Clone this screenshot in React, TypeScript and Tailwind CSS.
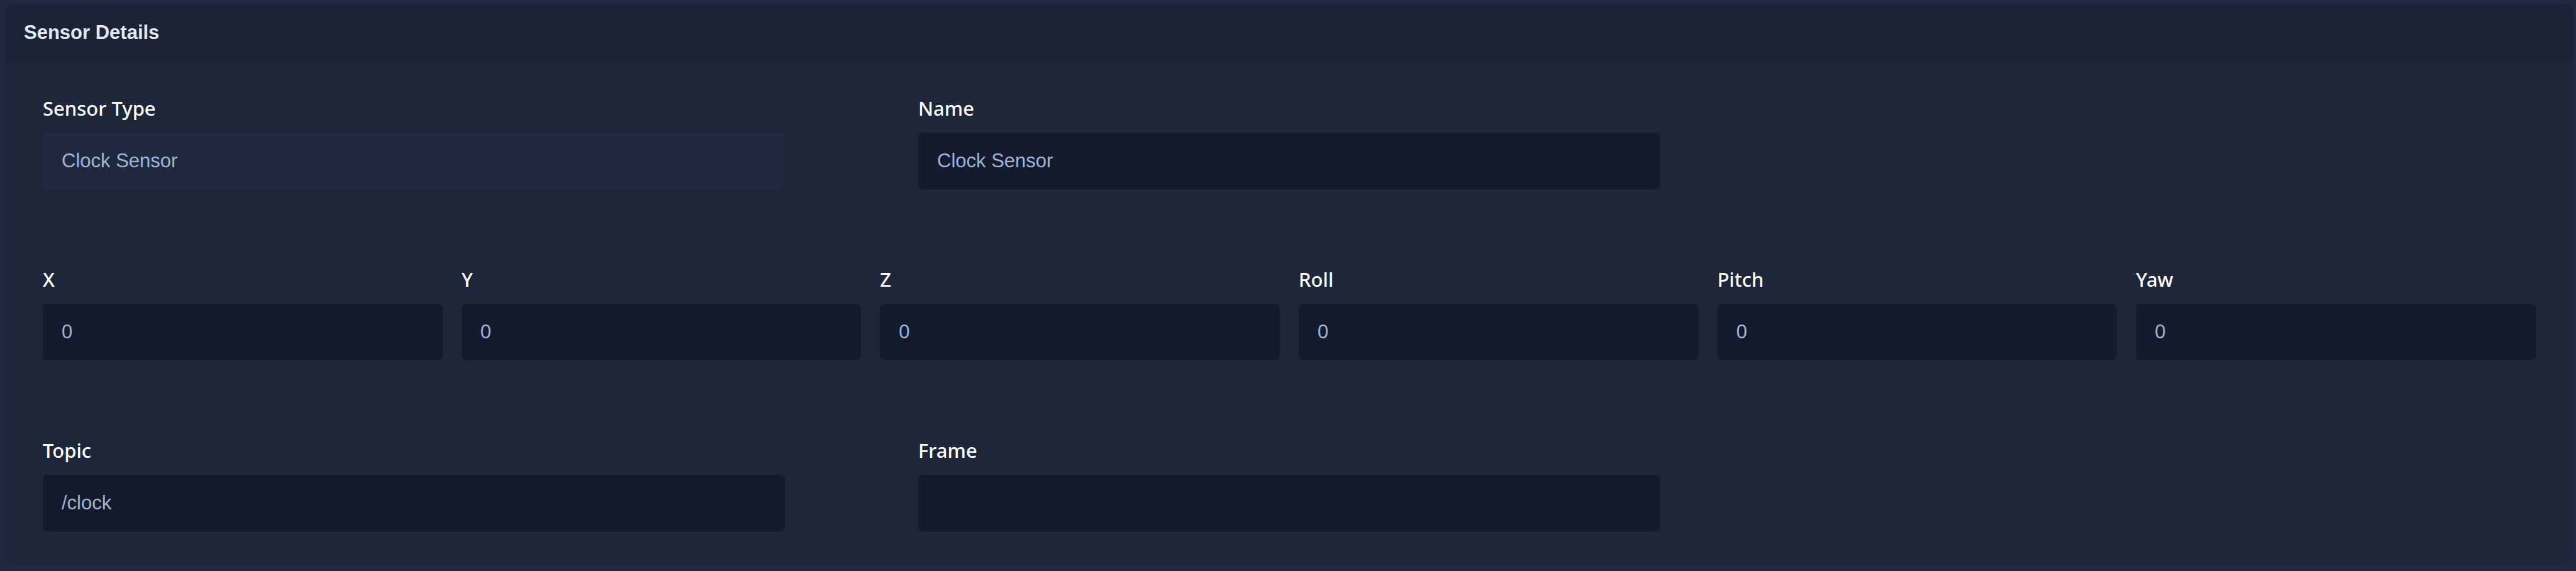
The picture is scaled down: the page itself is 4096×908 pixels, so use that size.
import { useId } from "react";

type FieldProps = {
  label: string;
  value: string;
  disabled?: boolean;
};

function Field({ label, value, disabled = false }: FieldProps) {
  const id = useId();
  return (
    <div className="flex min-w-0 flex-col gap-3.5">
      <label
        htmlFor={id}
        className="font-['Noto_Sans','Open_Sans',sans-serif] text-[31px] leading-[50px] font-medium text-white"
      >
        {label}
      </label>
      <input
        id={id}
        type="text"
        defaultValue={value}
        disabled={disabled}
        className="h-[90px] w-full rounded-lg bg-[#141b2d] px-[30px] text-[31px] text-[#a0b3d6] outline-none disabled:bg-[#21293e]"
      />
    </div>
  );
}

const pose = ["X", "Y", "Z", "Roll", "Pitch", "Yaw"];

export default function App() {
  return (
    <main className="min-h-screen bg-[#21293e] pt-[7px] pr-1 pb-[10px] pl-2 font-['Liberation_Sans',Arial,sans-serif]">
      <section className="overflow-hidden rounded-[15px] bg-[#1e2739]">
        <h2 className="flex h-[91px] items-center bg-[#1b2436] px-[30px] text-[31px] font-bold text-[#e2e8f5]">
          Sensor Details
        </h2>
        <form className="flex flex-col gap-[118px] px-[60px] pt-[49px] pb-[53px]">
          <div className="grid grid-cols-3 gap-x-[212px]">
            <Field label="Sensor Type" value="Clock Sensor" disabled />
            <Field label="Name" value="Clock Sensor" />
          </div>
          <div className="grid grid-cols-6 gap-x-[30px]">
            {pose.map((axis) => (
              <Field key={axis} label={axis} value="0" />
            ))}
          </div>
          <div className="grid grid-cols-3 gap-x-[212px]">
            <Field label="Topic" value="/clock" />
            <Field label="Frame" value="" />
          </div>
        </form>
      </section>
    </main>
  );
}
